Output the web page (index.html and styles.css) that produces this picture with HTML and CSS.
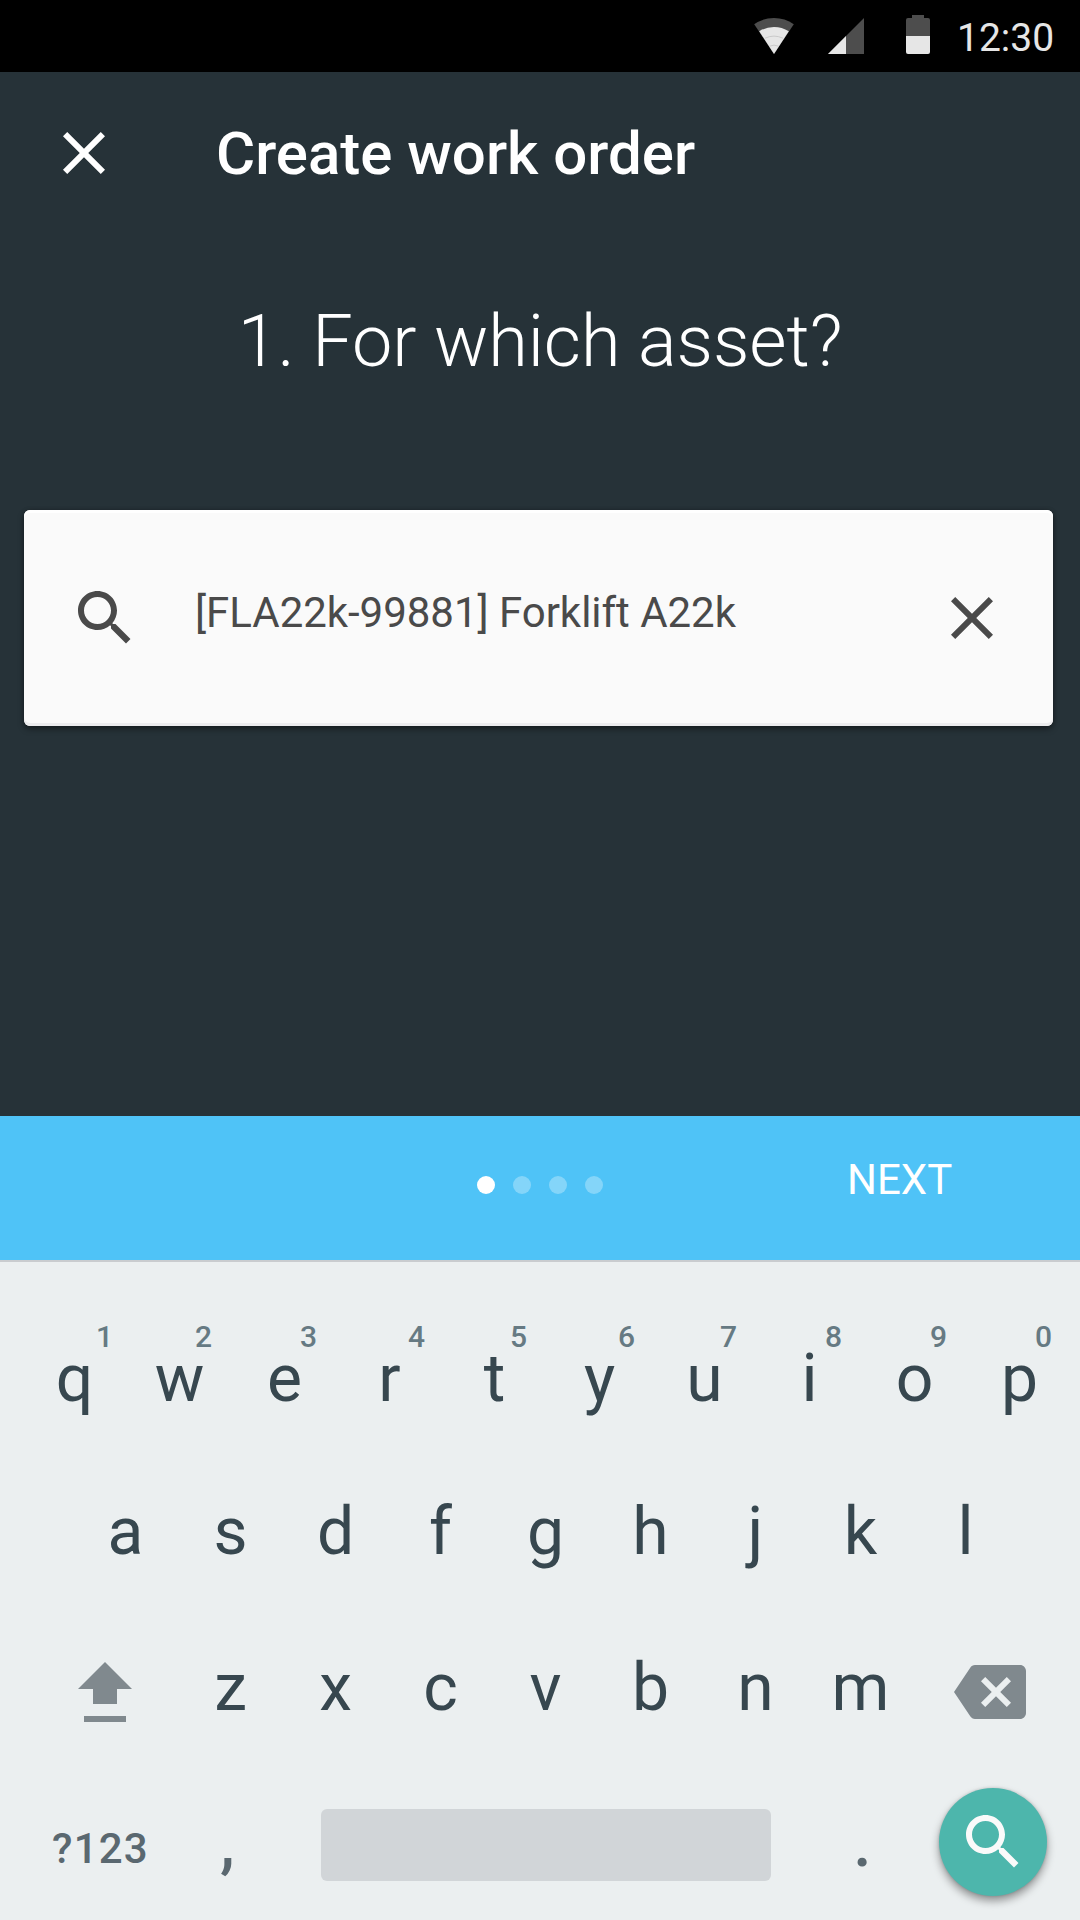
FILE: index.html
```html
<!DOCTYPE html>
<html lang="en">
<head>
<meta charset="utf-8">
<title>Create work order</title>
<link rel="stylesheet" href="styles.css">
</head>
<body>
<div class="status-bar">
  <svg class="wifi" width="40" height="36" viewBox="0 0 40 36"><path fill="#4d4d4d" d="M20 36 0.2 6.3Q9 0 20 0T39.8 6.3Z"/><path fill="#e6e6e6" d="M20 36 5.2 13.3Q12 9 20 9T34.8 13.3Z"/><path fill="none" stroke="#bdbdbd" stroke-width=".7" d="M11 20.2Q20 16 29 20.2M15.5 28.2Q20 26 24.5 28.2"/></svg>
  <svg class="signal" width="36" height="36" viewBox="0 0 36 36"><path fill="#4d4d4d" d="M36 0V36H0Z"/><path fill="#e6e6e6" d="M18 18V36H0Z"/></svg>
  <svg class="battery" width="24" height="39" viewBox="0 0 24 39"><path fill="#4d4d4d" d="M6 0H18V3H22Q24 3 24 5V21H0V5Q0 3 2 3H6Z"/><path fill="#e6e6e6" d="M0 21H24V37Q24 39 22 39H2Q0 39 0 37Z"/></svg>
  <span class="clock">12:30</span>
</div>
<main class="screen">
  <header class="app-bar">
    <svg class="icon" viewBox="0 0 24 24"><path d="M19 6.41 17.59 5 12 10.59 6.41 5 5 6.41 10.59 12 5 17.59 6.41 19 12 13.41 17.59 19 19 17.59 13.41 12z"/></svg>
    <h1 class="title">Create work order</h1>
  </header>
  <h2 class="question">1. For which asset?</h2>
  <div class="search-card">
    <svg class="icon" viewBox="0 0 24 24"><path d="M15.5 14h-.79l-.28-.27C15.41 12.59 16 11.11 16 9.5 16 5.91 13.09 3 9.5 3S3 5.91 3 9.5 5.91 16 9.5 16c1.61 0 3.09-.59 4.23-1.57l.27.28v.79l5 4.99L20.49 19l-4.99-5zm-6 0C7.01 14 5 11.99 5 9.5S7.01 5 9.5 5 14 7.01 14 9.5 11.99 14 9.5 14z"/></svg>
    <span class="search-text">[FLA22k-99881] Forklift A22k</span>
    <svg class="icon" viewBox="0 0 24 24"><path d="M19 6.41 17.59 5 12 10.59 6.41 5 5 6.41 10.59 12 5 17.59 6.41 19 12 13.41 17.59 19 19 17.59 13.41 12z"/></svg>
  </div>
</main>
<nav class="stepper">
  <div class="dots"><i class="dot active"></i><i class="dot"></i><i class="dot"></i><i class="dot"></i></div>
  <span class="next">NEXT</span>
</nav>
<section class="keyboard">
  <div class="row row-top">
    <span class="key">q<sup class="hint far">1</sup></span><span class="key">w<sup class="hint">2</sup></span><span class="key">e<sup class="hint">3</sup></span><span class="key">r<sup class="hint mid">4</sup></span><span class="key">t<sup class="hint">5</sup></span><span class="key">y<sup class="hint mid">6</sup></span><span class="key">u<sup class="hint">7</sup></span><span class="key">i<sup class="hint">8</sup></span><span class="key">o<sup class="hint">9</sup></span><span class="key">p<sup class="hint">0</sup></span>
  </div>
  <div class="row row-home">
    <span class="key">a</span><span class="key">s</span><span class="key">d</span><span class="key">f</span><span class="key">g</span><span class="key">h</span><span class="key">j</span><span class="key">k</span><span class="key">l</span>
  </div>
  <div class="row row-bottom">
    <svg class="shift" width="54" height="60" viewBox="0 0 54 60"><path d="M27 0 54 27H39V42H15V27H0ZM6 54H48V60H6Z"/></svg>
    <div class="letters"><span class="key">z</span><span class="key">x</span><span class="key">c</span><span class="key">v</span><span class="key">b</span><span class="key">n</span><span class="key">m</span></div>
    <svg class="icon backspace" viewBox="0 0 24 24"><path d="M22 3H7c-.69 0-1.23.35-1.59.88L0 12l5.41 8.11c.36.53.9.89 1.59.89h15c1.1 0 2-.9 2-2V5c0-1.1-.9-2-2-2zm-3 12.59L17.59 17 14 13.41 10.41 17 9 15.59 12.59 12 9 8.41 10.41 7 14 10.59 17.59 7 19 8.41 15.41 12 19 15.59z"/></svg>
  </div>
  <div class="row row-space">
    <span class="symbols">?123</span>
    <span class="punct">,</span>
    <span class="space"></span>
    <span class="punct">.</span>
    <span class="search-key"><svg class="icon" viewBox="0 0 24 24"><path d="M15.5 14h-.79l-.28-.27C15.41 12.59 16 11.11 16 9.5 16 5.91 13.09 3 9.5 3S3 5.91 3 9.5 5.91 16 9.5 16c1.61 0 3.09-.59 4.23-1.57l.27.28v.79l5 4.99L20.49 19l-4.99-5zm-6 0C7.01 14 5 11.99 5 9.5S7.01 5 9.5 5 14 7.01 14 9.5 11.99 14 9.5 14z"/></svg></span>
  </div>
</section>
</body>
</html>
```
FILE: styles.css
```css
* { box-sizing: border-box; }
body {
  margin: 0;
  width: 1080px;
  height: 1920px;
  display: flex;
  flex-direction: column;
  overflow: hidden;
  background: #263238;
  color: #fff;
  font-family: Roboto, sans-serif;
}
svg { display: block; flex: none; }
.icon { width: 72px; height: 72px; fill: currentColor; }

.status-bar {
  height: 72px;
  padding: 0 26px 0 754px;
  display: flex;
  align-items: center;
  background: #000;
  color: #e6e6e6;
}
.signal { margin-left: 34px; }
.battery { margin: 0 0 3px 42px; }
.clock { margin: 3px 0 0 27px; font-size: 39px; line-height: 48px; }

.screen { height: 1044px; display: flex; flex-direction: column; }
.app-bar { height: 162px; padding-left: 48px; display: flex; align-items: center; }
.title { margin: 2px 0 0 96px; font-size: 60px; font-weight: 500; line-height: 72px; }
.question {
  margin: 63px 0 0;
  height: 90px;
  font-size: 72px;
  font-weight: 300;
  line-height: 90px;
  letter-spacing: -.05px;
  text-align: center;
}
.search-card {
  margin: 123px 27px 0 24px;
  height: 216px;
  padding: 0 45px;
  display: flex;
  align-items: center;
  background: #fafafa;
  color: #4a4a4a;
  border-radius: 6px;
  box-shadow: inset 0 3px #fff, inset 0 -3px #ececee, 0 3px 6px rgba(0, 0, 0, .4), 0 0 4px rgba(0, 0, 0, .2);
}
.search-text { flex: 1; margin: 0 0 11px 54px; font-size: 42px; line-height: 50px; letter-spacing: -.03px; }

.stepper {
  height: 144px;
  display: grid;
  grid-template-columns: 477px 373px 1fr;
  align-items: center;
  background: #4fc3f7;
}
.dots { grid-column: 2; display: flex; gap: 18px; margin-top: -6px; }
.dot { width: 18px; height: 18px; border-radius: 50%; background: rgba(255, 255, 255, .3); }
.dot.active { background: #fff; }
.next { margin: 0 0 17px -3px; font-size: 42px; line-height: 50px; }

.keyboard {
  height: 660px;
  padding-top: 40px;
  border-top: 2px solid #c9cccf;
  background: #ebeff0;
  color: #37474f;
  font-size: 66px;
  line-height: 78px;
}
.row { display: flex; align-items: center; height: 153px; }
.row-top { padding-left: 22px; }
.row-home { padding-left: 73px; }
.row-bottom { height: 159px; padding-left: 78px; color: #80898e; }
.key { position: relative; width: 105px; flex: none; text-align: center; }
.hint {
  position: absolute;
  left: 66px;
  top: -21px;
  width: 21px;
  color: #667a83;
  font-size: 30px;
  font-weight: 500;
  line-height: 36px;
}
.hint.mid { left: 69px; }
.hint.far { left: 72px; }
.shift { margin-top: 9px; fill: currentColor; }
.letters { display: flex; margin: 0 41px 0 46px; color: #37474f; }
.backspace { margin-top: 9px; }

.row-space { color: #5a6870; font-weight: 500; }
.symbols { width: 175px; padding: 10px 0 0 52px; font-size: 42px; letter-spacing: 1.2px; }
.punct { width: 105px; text-align: center; }
.space { width: 450px; height: 72px; margin: 3px 39px 0 41px; border-radius: 6px; background: #d1d5d8; }
.search-key {
  width: 108px;
  height: 108px;
  margin: -3px 0 0 24px;
  display: grid;
  place-items: center;
  border-radius: 50%;
  background: #4db6ac;
  color: #fafafa;
  box-shadow: 0 5px 8px rgba(0, 0, 0, .38), 0 0 3px rgba(0, 0, 0, .16);
}
```
